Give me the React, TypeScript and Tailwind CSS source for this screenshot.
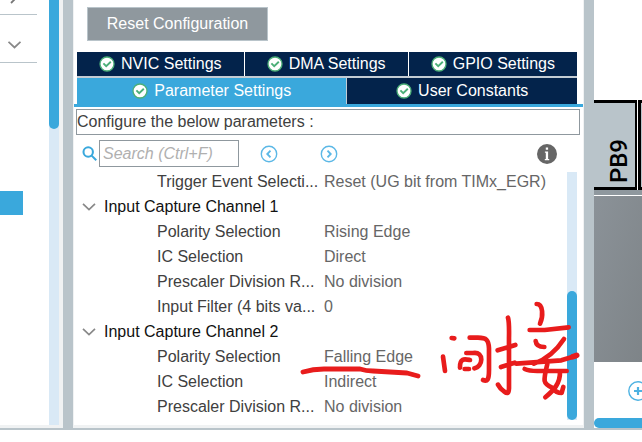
import { Fragment } from "react";

const topTabs = ["NVIC Settings", "DMA Settings", "GPIO Settings"];

const groups = [
  {
    title: "",
    rows: [{ name: "Trigger Event Selecti...", value: "Reset (UG bit from TIMx_EGR)" }],
  },
  {
    title: "Input Capture Channel 1",
    rows: [
      { name: "Polarity Selection", value: "Rising Edge" },
      { name: "IC Selection", value: "Direct" },
      { name: "Prescaler Division R...", value: "No division" },
      { name: "Input Filter (4 bits va...", value: "0" },
    ],
  },
  {
    title: "Input Capture Channel 2",
    rows: [
      { name: "Polarity Selection", value: "Falling Edge" },
      { name: "IC Selection", value: "Indirect" },
      { name: "Prescaler Division R...", value: "No division" },
    ],
  },
];

function CheckIcon() {
  return (
    <svg className="size-4 shrink-0" viewBox="0 0 16 16" fill="none">
      <circle cx="8" cy="8" r="7" fill="#fff" stroke="#4caf78" strokeWidth="1.3" />
      <path d="M4.4 7.4 7.2 10.2 11.8 5.8" stroke="#4caf78" strokeWidth="1.9" />
    </svg>
  );
}

function StepIcon({ d }: { d: string }) {
  return (
    <svg className="size-[18px]" viewBox="0 0 18 18" fill="none" stroke="#5cb8e6" strokeWidth="1.4">
      <circle cx="9" cy="9" r="7.7" />
      <path d={d} strokeWidth="1.9" />
    </svg>
  );
}

function Splitter() {
  return <div className="w-[10px] shrink-0 bg-[#b9c4ca]" />;
}

function Categories() {
  return (
    <aside className="flex w-[63px] shrink-0 border-b-3 border-[#f0f2f3]">
      <div className="w-[49px]">
        <button aria-label="Collapse" className="flex h-[15px] w-[37px] items-start border-b border-[#b9c4ca] pl-2">
          <svg className="h-1 w-3" viewBox="0 0 12 4" fill="none" stroke="#777" strokeWidth="1.8">
            <path d="M3 3 7 -1" />
          </svg>
        </button>
        <button aria-label="Expand" className="flex h-12 w-[37px] items-center border-b border-[#b9c4ca] pt-3 pl-2">
          <svg className="h-2 w-[13px]" viewBox="0 0 13 8" fill="none" stroke="#888" strokeWidth="1.8">
            <path d="M.5 .8 6.5 6.5 12.5 .8" />
          </svg>
        </button>
        <div className="mt-32 h-6 w-[23px] bg-[#3aa8dc]" />
      </div>
      <div className="w-[10px] bg-[#d9e9f6]">
        <div className="h-[129px] rounded-b-full bg-[#3aa8dc]" />
      </div>
      <div className="w-1 bg-[#f0f2f3]" />
    </aside>
  );
}

function Tabs() {
  return (
    <div role="tablist" className="border-b-3 border-[#3aa8dc] pr-[6px] pl-[3px] text-white">
      <div className="flex gap-px border-b-2 border-[#c3ccd4]">
        {topTabs.map((tab) => (
          <button key={tab} role="tab" className="flex h-6 flex-auto items-center justify-center gap-[6px] bg-[#03234b]">
            <CheckIcon />
            {tab}
          </button>
        ))}
      </div>
      <div className="flex">
        <button role="tab" aria-selected="true" className="flex h-[26px] grow-27 basis-0 items-center justify-center gap-[6px] bg-[#3aa8dc]">
          <CheckIcon />
          Parameter Settings
        </button>
        <button role="tab" className="flex h-[26px] grow-23 basis-0 items-center justify-center gap-[6px] border-l border-[#c3ccd4] bg-[#03234b]">
          <CheckIcon />
          User Constants
        </button>
      </div>
    </div>
  );
}

function SearchBar() {
  return (
    <div className="flex h-[35px] items-center pt-[2px] pr-[26px] pl-2">
      <label htmlFor="search" aria-label="Search" className="w-[17px]">
        <svg className="size-[15px]" viewBox="0 0 14 14" fill="none" stroke="#3aa8dc" strokeWidth="1.9">
          <circle cx="5.8" cy="5.6" r="4.4" />
          <path d="m9 9 4.3 4.3" />
        </svg>
      </label>
      <input
        id="search"
        placeholder="Search (Ctrl+F)"
        className="h-[27px] w-[140px] border border-[#8f989e] px-[3px] italic outline-none placeholder:text-[#b0b0b0]"
      />
      <button aria-label="Previous" className="ml-[21px]">
        <StepIcon d="M10.5 5.7 7.3 9l3.2 3.3" />
      </button>
      <button aria-label="Next" className="ml-[42px]">
        <StepIcon d="M7.5 5.7 10.7 9l-3.2 3.3" />
      </button>
      <button aria-label="Info" className="ml-auto">
        <svg className="size-5" viewBox="0 0 20 20">
          <circle cx="10" cy="10" r="10" fill="#666" />
          <path d="M8.8 3.6h2.3v2.2H8.8zM7.9 7.6h3.2v7.4h1.1v1.2H7.8v-1.2h1V8.8h-.9z" fill="#fff" />
        </svg>
      </button>
    </div>
  );
}

function ParameterTree() {
  return (
    <div className="flex pr-[6px]">
      <table className="w-full table-fixed">
        <colgroup>
          <col className="w-[250px]" />
          <col />
        </colgroup>
        <tbody>
          {groups.map((group, i) => (
            <Fragment key={i}>
              {group.title && (
                <tr className="h-[25px]">
                  <th colSpan={2} className="p-0 pl-2 text-left align-top font-normal text-[#111]">
                    <button className="flex items-center gap-2">
                      <svg className="h-2 w-[14px]" viewBox="0 0 14 8" fill="none" stroke="#888" strokeWidth="1.7">
                        <path d="M1 .8 7 6.5 13 .8" />
                      </svg>
                      {group.title}
                    </button>
                  </th>
                </tr>
              )}
              {group.rows.map((row) => (
                <tr key={row.name} className="h-[25px]">
                  <td className="p-0 pl-[83px] align-top whitespace-nowrap text-[#404040]">{row.name}</td>
                  <td className="p-0 align-top whitespace-nowrap text-[#666]">{row.value}</td>
                </tr>
              ))}
            </Fragment>
          ))}
        </tbody>
      </table>
      <div className="mt-[2px] flex w-[10px] shrink-0 flex-col justify-end bg-[#d9e9f6]">
        <div className="h-[129px] rounded-full bg-[#3aa8dc]" />
      </div>
    </div>
  );
}

// red pen marks: underline below "Falling Edge" and the handwritten note next to it
function Scribble() {
  return (
    <svg
      className="pointer-events-none absolute top-0 left-0 h-[442px] w-[569px]"
      viewBox="74 0 569 442"
      fill="none"
      stroke="#e81c1c"
      strokeLinecap="round"
      strokeLinejoin="round"
    >
      <path d="M303 372Q313 369 324 369H360Q366 371 373 371L390 372 407 373 418 376" strokeWidth="4.8" />
      <g transform="translate(428 290) scale(.3333)" strokeWidth="14">
        <path d="M71 144 79 145M45 200 51 243M125 143H150C175 143 182 150 183 175V240C183 270 178 275 165 270" />
        <path d="M115 189H135C170 183 165 232 139 235M96 233C95 203 110 207 126 210M110 237H123" />
        <path d="M240 83Q244 95 243 145V295C242 312 238 312 228 304Q216 296 210 284M209 181 262 165M219 231 260 218" />
        <path d="M326 42C346 42 346 80 336 101M305 120H350L422 112M323 153Q325 171 349 171" />
        <path d="M408 147C382 187 352 209 318 221M265 221 400 211 445 197" />
        <path d="M435 200 446 196" strokeWidth="17" />
        <path d="M290 237Q305 244 335 243H416M358 222C345 275 345 280 372 293Q385 309 401 309L406 291M396 245C397 280 378 300 352 322" />
      </g>
    </svg>
  );
}

function PinView() {
  return (
    <section className="flex w-12 shrink-0 flex-col overflow-hidden pt-[100px]">
      <div className="flex h-[95px] w-24 gap-px border-b-5 border-[#8f989e]">
        <div className="flex w-[43px] shrink-0 items-end justify-center border-y-3 border-r-2 border-black bg-[#b9c4ca] pb-1 pl-2">
          <span className="rotate-180 font-[Roboto,sans-serif] text-2xl leading-8 font-medium text-black [writing-mode:vertical-rl]">PB9</span>
        </div>
        <div className="w-11 shrink-0 border-3 border-black bg-[#b9c4ca]" />
      </div>
      <div className="mt-px h-[166px] bg-linear-to-br from-[#8b9298] to-[#7e8488]" />
      <button aria-label="Zoom in" className="mt-[19px] ml-[34px] size-5">
        <svg className="size-5" viewBox="0 0 20 20" fill="none" stroke="#4db2e2">
          <circle cx="10" cy="10" r="9.2" strokeWidth="1.4" />
          <path d="M6 10h8M10 6v8" strokeWidth="2.2" />
        </svg>
      </button>
      <div className="mt-auto h-[10px] w-24 rounded-full bg-[#3aa8dc]" />
    </section>
  );
}

export default function App() {
  return (
    <div className="min-h-screen bg-white font-['Liberation_Sans',Arial,sans-serif] text-base leading-6 text-[#404040]">
      <div className="flex border-b-2 border-[#b9c4ca]">
        <Categories />
        <Splitter />
        <main className="relative min-w-0 flex-1 border-x border-b-3 border-[#f0f2f3] pt-[7px] pb-[5px]">
          <button className="ml-[13px] block h-[34px] w-[181px] border border-[#b9c4ca] bg-[#8f989e] text-white">
            Reset Configuration
          </button>
          <div className="mt-[11px]">
            <Tabs />
          </div>
          <p className="mt-[2px] mr-[3px] ml-[2px] h-[26px] border border-[#8f989e]">Configure the below parameters :</p>
          <SearchBar />
          <ParameterTree />
          <Scribble />
        </main>
        <Splitter />
        <PinView />
      </div>
    </div>
  );
}
